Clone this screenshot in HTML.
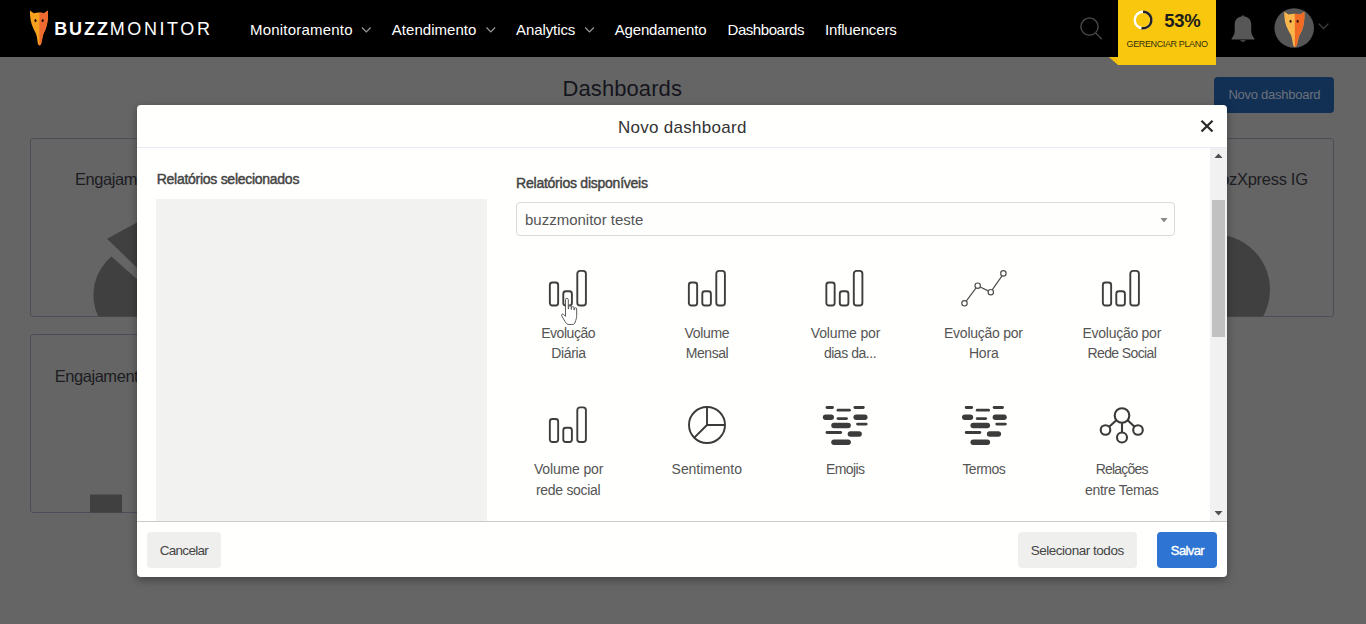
<!DOCTYPE html>
<html lang="pt-BR">
<head>
<meta charset="utf-8">
<title>Dashboards - Buzzmonitor</title>
<style>
html,body{margin:0;padding:0}
body{width:1366px;height:624px;overflow:hidden;position:relative;background:#656565;font-family:"Liberation Sans",sans-serif}
.t{position:absolute;white-space:pre;line-height:1}
.abs{position:absolute}
.layer{position:absolute;left:0;top:0;width:1366px;height:624px}
#header{position:absolute;left:0;top:0;width:1366px;height:57px;background:#000}
.card{position:absolute;border:1px solid #4d4d58;border-radius:3px;background:#656565;box-sizing:border-box;overflow:hidden}
#newbtn{position:absolute;left:1214px;top:77px;width:120px;height:36px;border-radius:4px;background:#123054}
#plan{position:absolute;left:1118px;top:0;width:98px;height:65px;background:#f9c80e}
#modal{position:absolute;left:137px;top:105px;width:1090px;height:472px;background:#fffffd;border-radius:4px;box-shadow:0 3px 9px rgba(0,0,0,.35);overflow:hidden}
.hr{position:absolute;left:0;width:1090px;height:1px}
#selbox{position:absolute;left:19px;top:94px;width:331px;height:322px;background:#f2f2f1}
#select{position:absolute;left:379px;top:97px;width:659px;height:34px;box-sizing:border-box;border:1px solid #d9d9de;border-radius:4px;background:#fefefd}
#sbar{position:absolute;left:1073px;top:43px;width:17px;height:373px;background:#f1f1f1}
#thumb{position:absolute;left:2px;top:52px;width:13px;height:137px;background:#c1c1c1}
.btn{position:absolute;top:427px;height:36px;border-radius:4px;background:#efefee}
</style>
</head>
<body>

<!-- ===== page behind the overlay ===== -->
<div class="layer" id="bg">
  <div class="card" style="left:30px;top:138px;width:1304px;height:179px"></div>
  <div class="card" style="left:30px;top:334px;width:430px;height:179px"></div>
  <svg class="abs" style="left:0;top:0" width="1366" height="624" viewBox="0 0 1366 624">
    <!-- left pie -->
    <g fill="#404040">
      <path d="M107,238.800 L137,222.600 L137,267.700 Z"/>
      <path d="M111.500,256.500 L137,279.200 L137,316.500 L98.200,316.500 A50,50 0 0 1 111.500,256.500 Z"/>
      <path d="M1227,235.700 A55.300,55.300 0 0 1 1263,316.500 L1227,316.500 Z"/>
      <rect x="90" y="494.5" width="32" height="18"/>
    </g>
  </svg>
  <span class="t" style="left:562.60px;top:78.00px;font-size:22px;font-weight:400;color:#15151c;letter-spacing:0.073px;">Dashboards</span>
  <div id="newbtn"></div>
  <span class="t" style="left:1228.40px;top:88.00px;font-size:13px;font-weight:400;color:#6c727c;letter-spacing:-0.247px;">Novo dashboard</span>
  <span class="t" style="left:75.00px;top:171.00px;font-size:16.5px;font-weight:400;color:#1c1c22;letter-spacing:-0.45px;">Engajamento</span>
  <span class="t" style="left:1209.50px;top:171.00px;font-size:16.5px;font-weight:400;color:#1c1c22;letter-spacing:-0.3px;">BozXpress IG</span>
  <span class="t" style="left:54.70px;top:368.00px;font-size:16.5px;font-weight:400;color:#1c1c22;letter-spacing:-0.45px;">Engajamento</span>
</div>

<!-- ===== top bar ===== -->
<div id="header">
  <svg class="abs" style="left:28px;top:9px" width="22" height="38" viewBox="0 0 22 38">
    <path d="M1.900,1.600 L5.800,4.200 Q11,2.600 16.200,4.200 L19.900,1.600 C20.200,9 19.600,15 17.800,19.800 C16.800,22 16,23.500 15.600,24.600 C14.800,26.800 14.500,28 14.300,29.500 L13.300,34.300 Q13,36.300 11.500,36.500 Q10,36.300 9.800,34.300 L9.100,29.500 C8.900,28 8.600,26.800 7.900,24.600 C7.300,23.300 6.500,22 5.500,19.800 C3,15 1.800,9 1.900,1.600 Z" fill="#f6a21e"/>
    <path d="M11.400,3.400 Q13.800,3.400 16.200,4.200 L19.900,1.600 C20.200,9 19.600,15 17.800,19.800 C16.800,22 16,23.500 15.600,24.600 C14.800,26.800 14.500,28 14.300,29.500 L13.300,34.300 Q13,36.300 11.500,36.500 L11.400,36.500 Z" fill="#ee6a30"/>
    <ellipse cx="7.500" cy="11.600" rx="1.100" ry="1.700" fill="#2a1206"/><ellipse cx="14.700" cy="11.600" rx="1.100" ry="1.700" fill="#2a1206"/>
  </svg>
  <span class="t" style="left:54.20px;top:20.00px;font-size:18px;font-weight:700;color:#fff;letter-spacing:1.900px;">BUZZ</span><span class="t" style="left:109.80px;top:20.00px;font-size:18px;font-weight:400;color:#fff;letter-spacing:2.571px;">MONITOR</span>
  <span class="t" style="left:250.00px;top:22.00px;font-size:15px;font-weight:400;color:#fff;letter-spacing:0.203px;">Monitoramento</span><span class="t" style="left:391.80px;top:22.00px;font-size:15px;font-weight:400;color:#fff;letter-spacing:0.037px;">Atendimento</span><span class="t" style="left:516.00px;top:22.00px;font-size:15px;font-weight:400;color:#fff;letter-spacing:-0.091px;">Analytics</span><span class="t" style="left:614.70px;top:22.00px;font-size:15px;font-weight:400;color:#fff;letter-spacing:-0.151px;">Agendamento</span><span class="t" style="left:727.50px;top:22.00px;font-size:15px;font-weight:400;color:#fff;letter-spacing:-0.443px;">Dashboards</span><span class="t" style="left:825.00px;top:22.00px;font-size:15px;font-weight:400;color:#fff;letter-spacing:-0.167px;">Influencers</span>
  <svg class="abs" style="left:0;top:0" width="1366" height="57" viewBox="0 0 1366 57" fill="none" stroke="#9a9a9a" stroke-width="1.2">
    <path d="M362,27.5 L366.3,32 L370.6,27.5"/>
    <path d="M486.5,27.5 L490.8,32 L495.1,27.5"/>
    <path d="M585.2,27.5 L589.5,32 L593.8,27.5"/>
    <g stroke="#444448" stroke-width="1.5">
      <circle cx="1089.5" cy="26.7" r="8.6"/>
      <path d="M1095.8,33 L1101.8,39.2"/>
      <path d="M1318.8,23.6 L1323.6,28.6 L1328.4,23.6" stroke-width="1.3"/>
    </g>
  </svg>
  <!-- bell -->
  <svg class="abs" style="left:1230px;top:14px" width="26" height="30" viewBox="0 0 26 30">
    <path d="M13,2.300 C17.300,2.300 21.200,5.300 21.200,10.200 V17 C21.300,20 22.500,22 24.400,24.600 V25.600 H1.600 V24.600 C3.500,22 4.700,20 4.700,17 V10.200 C4.800,5.300 8.700,2.300 13,2.300 Z M10,26.300 H16 Q13,29.400 10,26.300 Z" fill="#575757"/>
    <circle cx="13" cy="2.300" r="1" fill="#575757"/>
  </svg>
  <!-- avatar -->
  <svg class="abs" style="left:1274px;top:8px" width="40" height="40" viewBox="0 0 40 40">
    <circle cx="20.200" cy="20" r="19.800" fill="#565656"/>
    <g transform="translate(8.100,2.200) scale(1.117,1.010)">
      <path d="M1.900,1.600 L5.800,4.200 Q11,2.600 16.200,4.200 L19.900,1.600 C20.200,9 19.600,15 17.800,19.800 C16.800,22 16,23.500 15.600,24.600 C14.800,26.800 14.500,28 14.300,29.500 L13.300,34.300 Q13,36.300 11.500,36.500 Q10,36.300 9.800,34.300 L9.100,29.500 C8.900,28 8.600,26.800 7.900,24.600 C7.300,23.300 6.500,22 5.500,19.800 C3,15 1.800,9 1.900,1.600 Z" fill="#f9b64c"/>
      <path d="M11.400,3.400 Q13.800,3.400 16.200,4.200 L19.900,1.600 C20.200,9 19.600,15 17.800,19.800 C16.800,22 16,23.500 15.600,24.600 C14.800,26.800 14.500,28 14.300,29.500 L13.300,34.300 Q13,36.300 11.500,36.500 L11.400,36.500 Z" fill="#f06a24"/>
      <ellipse cx="7.600" cy="11" rx="0.900" ry="1.500" fill="#2a1206"/><ellipse cx="13.900" cy="11" rx="0.900" ry="1.500" fill="#2a1206"/>
    </g>
  </svg>
</div>
<!-- plan badge (overflows the bar) -->
<svg class="abs" style="left:1108px;top:57px" width="11" height="8" viewBox="0 0 11 8"><path d="M0.800,0 H11 V8 H10 Z" fill="#f5c10d"/></svg>
<div id="plan">
  <svg class="abs" style="left:14px;top:9px" width="22" height="22" viewBox="0 0 22 22" fill="none">
    <circle cx="11" cy="11" r="8.3" stroke="#fff" stroke-width="2.4"/>
    <path d="M11,2.700 A8.300,8.300 0 1 1 9.440,19.150" stroke="#222" stroke-width="2.4"/>
  </svg>
</div>
<div class="layer" style="height:70px"><span class="t" style="left:1164.20px;top:12.00px;font-size:18.5px;font-weight:700;color:#1c1c1c;letter-spacing:-0.266px;">53%</span><span class="t" style="left:1126.50px;top:40.00px;font-size:9px;font-weight:400;color:#33300a;letter-spacing:-0.367px;">GERENCIAR PLANO</span></div>

<!-- ===== modal ===== -->
<div id="modal">
  <div class="hr" style="top:42px;background:#e9e9f1"></div>
  <div class="hr" style="top:416px;background:#cbcbcd"></div>
  <svg class="abs" style="left:1063px;top:14px" width="14" height="14" viewBox="0 0 14 14"><path d="M1.500,1.700 L12.500,12.500 M12.500,1.700 L1.500,12.500" stroke="#2c2c2c" stroke-width="2.300"/></svg>
  <div id="selbox"></div>
  <div id="select"><svg class="abs" style="left:643px;top:15px" width="8" height="5" viewBox="0 0 8 5"><path d="M0.500,0 H7.500 L4,4.500 Z" fill="#888"/></svg></div>
  <div id="sbar">
    <svg class="abs" style="left:4px;top:5px" width="9" height="6" viewBox="0 0 9 6"><path d="M4.500,0.500 L8.500,5 H0.500 Z" fill="#505050"/></svg>
    <div id="thumb"></div>
    <svg class="abs" style="left:4px;top:362px" width="9" height="6" viewBox="0 0 9 6"><path d="M4.500,5.500 L8.500,1 H0.500 Z" fill="#505050"/></svg>
  </div>
  <div class="btn" style="left:10px;width:74px"></div>
  <div class="btn" style="left:881px;width:119px"></div>
  <div class="btn" style="left:1020px;width:60px;background:#2d74d3"></div>
</div>

<!-- modal contents drawn in page coordinates -->
<div class="layer" id="mc">
  <svg class="abs" style="left:0;top:0" width="1366" height="624" viewBox="0 0 1366 624">
    <g transform="translate(549,270)" fill="none" stroke="#3e3e3e" stroke-width="1.9">
        <rect x="0.850" y="12.500" width="8.300" height="23" rx="2.500"/>
        <rect x="14.300" y="21.200" width="8.600" height="14.300" rx="2.500"/>
        <rect x="28.300" y="0.850" width="8.600" height="34.650" rx="2.800"/>
    </g>
    <g transform="translate(688,270)" fill="none" stroke="#3e3e3e" stroke-width="1.9">
        <rect x="0.850" y="12.500" width="8.300" height="23" rx="2.500"/>
        <rect x="14.300" y="21.200" width="8.600" height="14.300" rx="2.500"/>
        <rect x="28.300" y="0.850" width="8.600" height="34.650" rx="2.800"/>
    </g>
    <g transform="translate(825.500,270)" fill="none" stroke="#3e3e3e" stroke-width="1.9">
        <rect x="0.850" y="12.500" width="8.300" height="23" rx="2.500"/>
        <rect x="14.300" y="21.200" width="8.600" height="14.300" rx="2.500"/>
        <rect x="28.300" y="0.850" width="8.600" height="34.650" rx="2.800"/>
    </g>
    <g transform="translate(1102,270)" fill="none" stroke="#3e3e3e" stroke-width="1.9">
        <rect x="0.850" y="12.500" width="8.300" height="23" rx="2.500"/>
        <rect x="14.300" y="21.200" width="8.600" height="14.300" rx="2.500"/>
        <rect x="28.300" y="0.850" width="8.600" height="34.650" rx="2.800"/>
    </g>
    <g transform="translate(549,406.500)" fill="none" stroke="#3e3e3e" stroke-width="1.9">
        <rect x="0.850" y="12.500" width="8.300" height="23" rx="2.500"/>
        <rect x="14.300" y="21.200" width="8.600" height="14.300" rx="2.500"/>
        <rect x="28.300" y="0.850" width="8.600" height="34.650" rx="2.800"/>
    </g>
    <!-- line chart -->
    <g fill="none" stroke="#505050" stroke-width="1.200">
      <path d="M966.200,301.100 L976.100,287.900 M980.200,287 L988.300,290.900 M992.200,289.800 L1002,275.800"/>
      <circle cx="964.500" cy="303.300" r="2.700"/><circle cx="977.700" cy="285.700" r="2.700"/>
      <circle cx="990.800" cy="292.200" r="2.700"/><circle cx="1003.400" cy="273.400" r="2.700"/>
    </g>
    <!-- pie -->
    <g fill="none" stroke="#3a3a3a" stroke-width="1.900">
      <circle cx="707" cy="425" r="18"/>
      <path d="M707,407 V425 H725 M707,425 L694.300,437.700"/>
    </g>
    <g transform="translate(822.800,405)" stroke="#3c3c3c" stroke-linecap="round" fill="none">
        <g stroke-width="2.800">
          <path d="M4.200,2.500 H9.700"/><path d="M15.200,5.200 H26.600"/><path d="M32.100,2.500 H40.500"/>
          <path d="M15.200,13.600 H23.700"/><path d="M34.700,19.100 H43.400"/><path d="M4.200,27.500 H17.900"/>
        </g>
        <g stroke-width="5.500">
          <path d="M2.800,12.300 H8.400"/><path d="M33.400,12.300 H42"/><path d="M11.200,20.600 H25.300"/>
          <path d="M27.600,29 H36.300"/><path d="M11.200,37.300 H25.300"/>
        </g>
    </g>
    <g transform="translate(962,405)" stroke="#3c3c3c" stroke-linecap="round" fill="none">
        <g stroke-width="2.800">
          <path d="M4.200,2.500 H9.700"/><path d="M15.200,5.200 H26.600"/><path d="M32.100,2.500 H40.500"/>
          <path d="M15.200,13.600 H23.700"/><path d="M34.700,19.100 H43.400"/><path d="M4.200,27.500 H17.900"/>
        </g>
        <g stroke-width="5.500">
          <path d="M2.800,12.300 H8.400"/><path d="M33.400,12.300 H42"/><path d="M11.200,20.600 H25.300"/>
          <path d="M27.600,29 H36.300"/><path d="M11.200,37.300 H25.300"/>
        </g>
    </g>
    <!-- relations -->
    <g fill="none" stroke="#3a3a3a" stroke-width="2.100">
      <circle cx="1122" cy="415.500" r="7.300"/>
      <circle cx="1105.500" cy="430" r="4.800"/><circle cx="1138" cy="430" r="4.800"/><circle cx="1122" cy="437.500" r="5"/>
      <path d="M1122,422.800 V432.800 M1116.300,420.200 L1109.200,426.800 M1127.700,420.200 L1134.500,426.800"/>
    </g>
    <!-- mouse pointer (hand) -->
    <g transform="translate(560.500,298.500)">
      <path d="M5,1.200 a1.400,1.400 0 0 1 2.800,0 V10.500 l0.300,0 V8.500 a1.300,1.300 0 0 1 2.600,0 V10.800 l0.300,0 V9.300 a1.250,1.250 0 0 1 2.500,0 V11.500 l0.300,0 V10.500 a1.200,1.200 0 0 1 2.400,0 V17 c0,3 -1,4.500 -1.500,6.500 c-0.500,1.800 -1,2.500 -3.500,2.500 h-2.500 c-2,0 -3,-1 -4.200,-3 L1.300,17.500 c-0.800,-1.300 0.700,-2.600 1.900,-1.500 L5,17.800 Z" fill="#fff" stroke="#5a5a5a" stroke-width="1" stroke-linejoin="round"/>
    </g>
  </svg>
  <span class="t" style="left:618.00px;top:119.00px;font-size:17px;font-weight:400;color:#333;letter-spacing:0.287px;">Novo dashboard</span>
  <span class="t" style="left:156.70px;top:172.00px;font-size:14px;font-weight:400;color:#444;letter-spacing:-0.270px;-webkit-text-stroke:0.45px #444;">Relatórios selecionados</span><span class="t" style="left:516.10px;top:176.00px;font-size:14px;font-weight:400;color:#444;letter-spacing:-0.241px;-webkit-text-stroke:0.45px #444;">Relatórios disponíveis</span><span class="t" style="left:525.00px;top:212.00px;font-size:15px;font-weight:400;color:#555;letter-spacing:-0.006px;">buzzmonitor teste</span>
  <span class="t" style="left:541.20px;top:326.00px;font-size:14px;font-weight:400;color:#555;letter-spacing:-0.456px;">Evolução</span><span class="t" style="left:551.30px;top:346.00px;font-size:14px;font-weight:400;color:#555;letter-spacing:-0.376px;">Diária</span><span class="t" style="left:684.40px;top:326.00px;font-size:14px;font-weight:400;color:#555;letter-spacing:-0.301px;">Volume</span><span class="t" style="left:685.80px;top:346.00px;font-size:14px;font-weight:400;color:#555;letter-spacing:-0.448px;">Mensal</span><span class="t" style="left:810.70px;top:326.00px;font-size:14px;font-weight:400;color:#555;letter-spacing:-0.125px;">Volume por</span><span class="t" style="left:823.90px;top:346.00px;font-size:14px;font-weight:400;color:#555;letter-spacing:-0.459px;">dias da...</span><span class="t" style="left:944.00px;top:326.00px;font-size:14px;font-weight:400;color:#555;letter-spacing:-0.247px;">Evolução por</span><span class="t" style="left:968.90px;top:346.00px;font-size:14px;font-weight:400;color:#555;letter-spacing:-0.186px;">Hora</span><span class="t" style="left:1082.50px;top:326.00px;font-size:14px;font-weight:400;color:#555;letter-spacing:-0.265px;">Evolução por</span><span class="t" style="left:1087.50px;top:346.00px;font-size:14px;font-weight:400;color:#555;letter-spacing:-0.610px;">Rede Social</span>
  <span class="t" style="left:533.90px;top:462.00px;font-size:14px;font-weight:400;color:#555;letter-spacing:-0.148px;">Volume por</span><span class="t" style="left:536.00px;top:483.00px;font-size:14px;font-weight:400;color:#555;letter-spacing:-0.300px;">rede social</span><span class="t" style="left:671.60px;top:462.00px;font-size:14px;font-weight:400;color:#555;letter-spacing:-0.048px;">Sentimento</span><span class="t" style="left:826.00px;top:462.00px;font-size:14px;font-weight:400;color:#555;letter-spacing:-0.623px;">Emojis</span><span class="t" style="left:962.40px;top:462.00px;font-size:14px;font-weight:400;color:#555;letter-spacing:-0.521px;">Termos</span><span class="t" style="left:1095.70px;top:462.00px;font-size:14px;font-weight:400;color:#555;letter-spacing:-0.796px;">Relações</span><span class="t" style="left:1085.00px;top:483.00px;font-size:14px;font-weight:400;color:#555;letter-spacing:-0.298px;">entre Temas</span>
  <span class="t" style="left:159.70px;top:544.00px;font-size:13.5px;font-weight:400;color:#444;letter-spacing:-0.704px;">Cancelar</span><span class="t" style="left:1030.70px;top:544.00px;font-size:13.5px;font-weight:400;color:#444;letter-spacing:-0.472px;">Selecionar todos</span><span class="t" style="left:1170.80px;top:544.00px;font-size:13px;font-weight:400;color:#fff;letter-spacing:-0.592px;-webkit-text-stroke:0.4px #fff;">Salvar</span>
</div>
</body>
</html>
